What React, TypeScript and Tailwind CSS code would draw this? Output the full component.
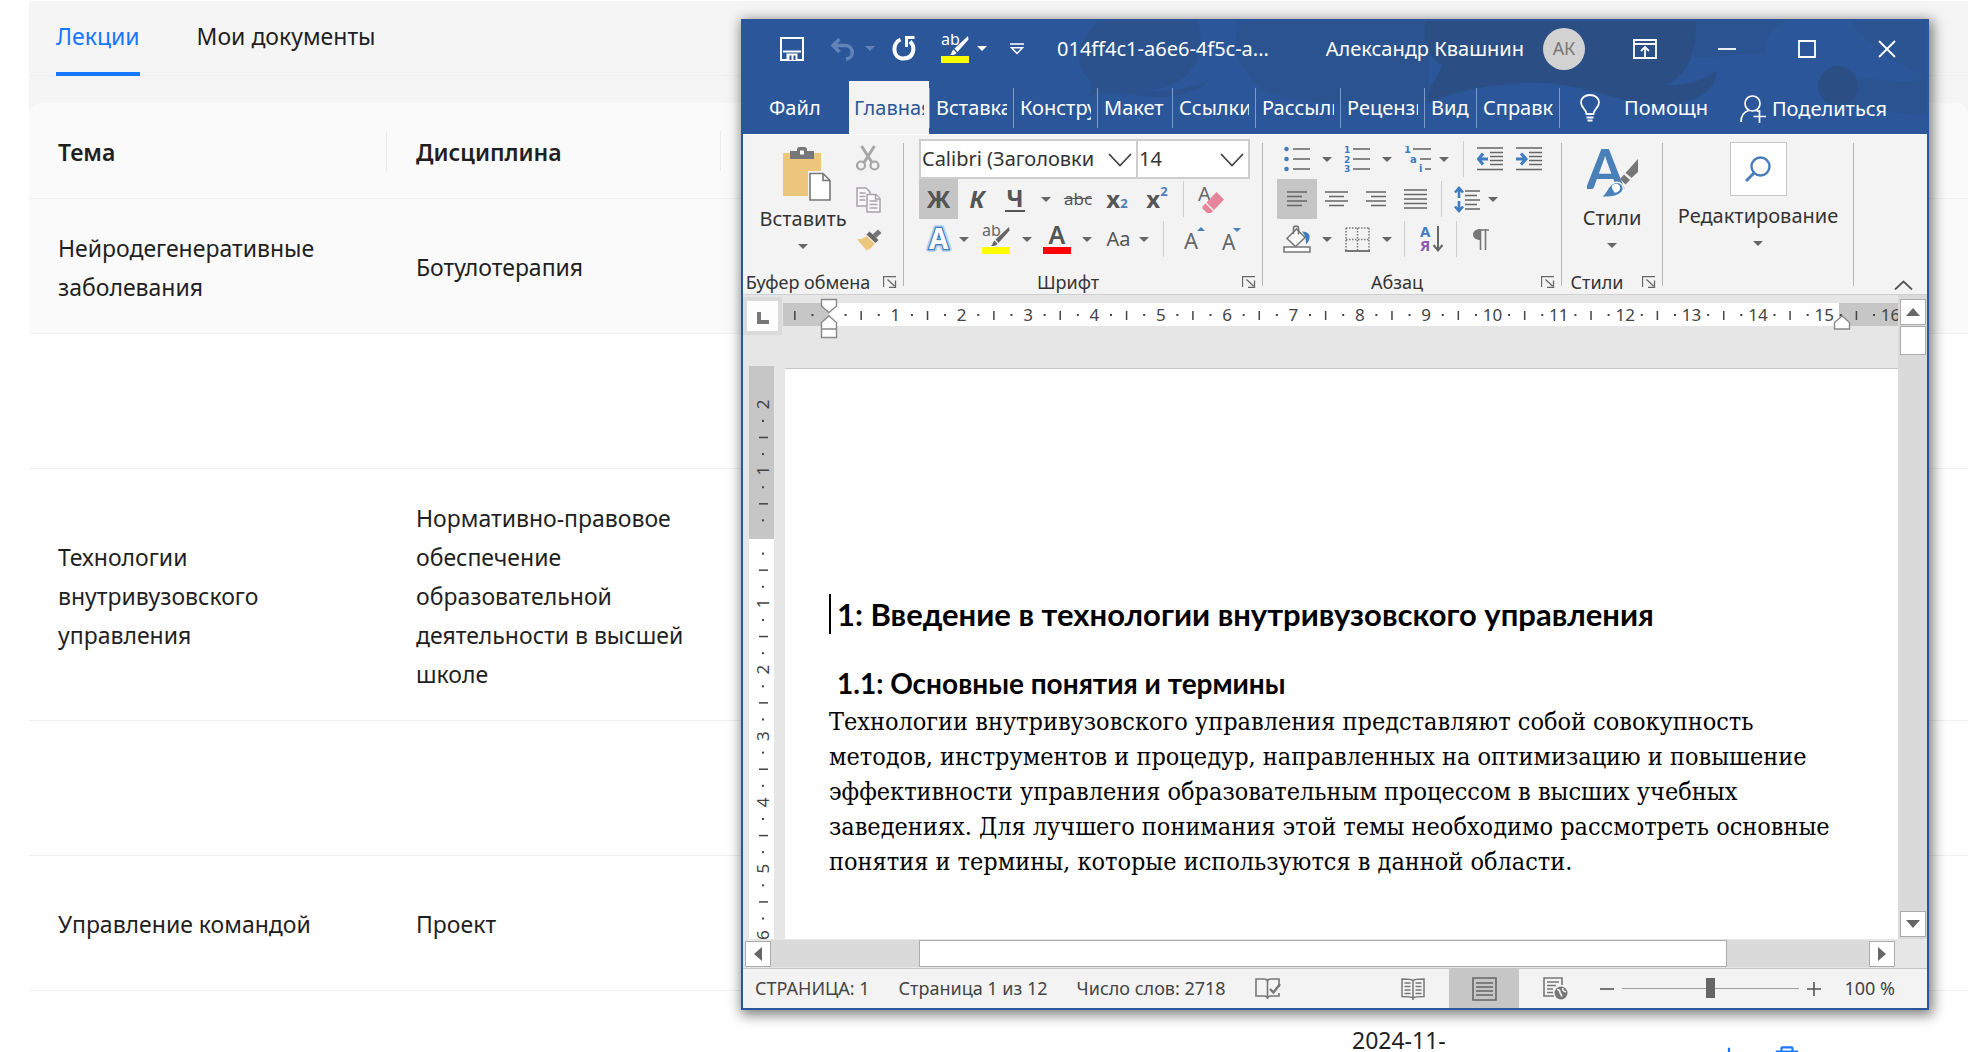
import type { ReactNode } from "react"
import { AiOutlineDelete, AiOutlineDownload } from "react-icons/ai"

interface Lecture {
  topic: string
  discipline: string
  height: string
  date?: string
  tinted?: boolean
}

const LECTURES: Lecture[] = [
  {
    topic: "Нейродегенеративные заболевания",
    discipline: "Ботулотерапия",
    height: "h-[135px]",
    tinted: true,
  },
  { topic: "", discipline: "", height: "h-[135px]" },
  {
    topic: "Технологии внутривузовского управления",
    discipline: "Нормативно-правовое обеспечение образовательной деятельности в высшей школе",
    height: "h-[252px]",
  },
  { topic: "", discipline: "", height: "h-[135px]" },
  { topic: "Управление командой", discipline: "Проект", height: "h-[135px]" },
  { topic: "", discipline: "", height: "h-[135px]", date: "2024-11-" },
]

const RIBBON_TABS = [
  { label: "Вставка", width: "w-[84px]" },
  { label: "Констру", width: "w-[84px]" },
  { label: "Макет", width: "w-[75px]" },
  { label: "Ссылки", width: "w-[83px]" },
  { label: "Рассылк", width: "w-[85px]" },
  { label: "Рецензи", width: "w-[84px]" },
  { label: "Вид", width: "w-[52px]" },
  { label: "Справк", width: "w-[83px]" },
]

// Un centimetro de la regla en pixeles
const CM = 66.35

/* ---------- Pagina de fondo ---------- */

function LecturesPage() {
  return (
    <main className="ml-[29px] mt-px bg-[#f5f5f5] text-[23px] leading-[39px] text-[#1f1f1f]">
      <nav className="mb-[27px] flex h-[75px] gap-[57px] border-b border-[#efefef] pl-[27px]">
        <a href="#lectures" className="h-[75px] border-b-4 border-[#1677ff] pt-4 text-[#1677ff]">
          Лекции
        </a>
        <a href="#documents" className="pt-4">
          Мои документы
        </a>
      </nav>

      <table className="w-full table-fixed border-separate border-spacing-0 text-left">
        <colgroup>
          <col className="w-[358px]" />
          <col className="w-[334px]" />
          <col className="w-[602px]" />
          <col className="w-[365px]" />
          <col />
        </colgroup>
        <thead>
          <tr className="h-[96px]">
            <th className="rounded-tl-xl border-b border-[#f0f0f0] bg-[#fafafa] pl-[29px] font-semibold">
              <div className="flex items-center justify-between">
                <span className="pt-1">Тема</span>
                <span className="h-10 w-px bg-[#ebebeb]" />
              </div>
            </th>
            <th className="border-b border-[#f0f0f0] bg-[#fafafa] pl-[29px] font-semibold">
              <div className="flex items-center justify-between">
                <span className="pt-1">Дисциплина</span>
                <span className="h-10 w-px bg-[#ebebeb]" />
              </div>
            </th>
            <td className="border-b border-[#f0f0f0] bg-[#fafafa]" />
            <td className="border-b border-[#f0f0f0] bg-[#fafafa]" />
            <td className="rounded-tr-xl border-b border-[#f0f0f0] bg-[#fafafa]" />
          </tr>
        </thead>
        <tbody>
          {LECTURES.map((l, i) => (
            <tr
              key={i}
              className={`${l.height} ${l.tinted ? "bg-[#fafafa]" : "bg-white"} [&>td]:border-b [&>td]:border-[#f0f0f0]`}
            >
              <td className="pl-[29px] pr-7 pt-[3px]">{l.topic}</td>
              <td className="pl-[29px] pr-7 pt-[3px]">{l.discipline}</td>
              <td />
              <td className="px-[29px] pt-[30px] align-top">{l.date}</td>
              <td className="pl-[26px]">
                {l.date && (
                  <div className="flex gap-7 text-[30px] text-[#1677ff]">
                    <button type="button" aria-label="Скачать">
                      <AiOutlineDownload />
                    </button>
                    <button type="button" aria-label="Удалить">
                      <AiOutlineDelete />
                    </button>
                  </div>
                )}
              </td>
            </tr>
          ))}
        </tbody>
      </table>
    </main>
  )
}

/* ---------- Piezas chicas de la cinta ---------- */

function Caret({ className = "" }: { className?: string }) {
  return (
    <svg viewBox="0 0 10 5" className={`h-[5px] w-[10px] shrink-0 ${className}`} aria-hidden="true">
      <path d="M0 0h10L5 5z" fill="currentColor" />
    </svg>
  )
}

function CaretButton({ width, label }: { width: string; label: string }) {
  return (
    <button
      type="button"
      aria-label={label}
      className={`flex h-full shrink-0 items-center justify-center text-[#666] ${width}`}
    >
      <Caret />
    </button>
  )
}

function Tool({
  width,
  label,
  active,
  className = "",
  children,
}: { width: string; label: string; active?: boolean; className?: string; children: ReactNode }) {
  return (
    <button
      type="button"
      aria-label={label}
      aria-pressed={active}
      className={`flex h-full shrink-0 items-center justify-center ${width} ${active ? "bg-[#c5c5c5]" : ""} ${className}`}
    >
      {children}
    </button>
  )
}

function Divider({ width }: { width: string }) {
  return (
    <div className={`flex h-full shrink-0 items-center justify-center ${width}`}>
      <div className="h-9 w-px bg-[#cfcfcf]" />
    </div>
  )
}

function GroupSeparator() {
  return <div className="my-2 w-px shrink-0 bg-[#b5b5b5]" />
}

function Group({ caption, width, children }: { caption?: string; width: string; children: ReactNode }) {
  return (
    <section className={`flex shrink-0 flex-col justify-between pb-[2px] ${width}`}>
      {children}
      {caption && (
        <div className="flex h-5 items-center pr-[6px] text-[18px] leading-5 text-[#333]">
          <span className="flex-1 whitespace-nowrap pr-[10px] text-center">{caption}</span>
          <button type="button" aria-label={`${caption}: параметры`}>
            <svg viewBox="0 0 14 12" className="h-3 w-[14px]" fill="none" stroke="#666">
              <path d="M.5 11V.5H13M4.500 3.500l7 6.500M12.500 4.500v7H6" strokeWidth="1.300" />
            </svg>
          </button>
        </div>
      )}
    </section>
  )
}

/** Lineas horizontales de un icono: [x1, x2, y]. */
function Lines({ rows, color = "#666", width = 1.6 }: { rows: number[][]; color?: string; width?: number }) {
  return (
    <path d={rows.map(([a, b, y]) => `M${a} ${y}H${b}`).join("")} stroke={color} strokeWidth={width} fill="none" />
  )
}

function HighlightIcon({ dark }: { dark?: boolean }) {
  const ink = dark ? "#666" : "#fff"
  return (
    <svg viewBox="0 0 28 29" className="h-[29px] w-7" aria-hidden="true">
      <text x="0" y="11" fontSize="16" fontFamily="Noto Sans" fill={ink}>
        ab
      </text>
      <path d="M27 2 13.500 14.500l3 3.500L27.500 5.500z" fill={ink} />
      <path d="M12.500 15.500l3 3.200c-1 2-3.500 2.300-6.500 2.300 1.800-1.300 1.800-4 3.500-5.500z" fill={ink} />
      <path d="M0 22h28v7H0z" fill="#ff0" />
    </svg>
  )
}

/* ---------- Encabezado de la ventana ---------- */

function HeaderArt() {
  return (
    <svg
      className="absolute inset-0 h-full w-full"
      viewBox="0 0 1184 113"
      preserveAspectRatio="none"
      aria-hidden="true"
    >
      <g fill="#2b4f85">
        <path
          d="M355 0h100c8 30-2 50-22 62-10 5-24 8-36 6 22 6 50 0 68-9-4 12-40 20-68 16-18-3-36-4-52 0 4-6 4-12 0-18C330 44 335 18 355 0z"
          opacity=".6"
        />
        <path d="M496 0h190v80c-20 8-34 12-62 8-30-8-60-4-104-18-20-18-34-40-24-70z" opacity=".5" />
        <path d="M683 0h270c0 34-8 54-30 64 16 2 36-4 50-14 2 20-24 34-56 34-46-2-80-24-134-22-44 2-74 10-98 20 0-18 10-26 14-38-14-8-20-24-16-44z" />
        <path d="M953 0h90c-18 8-24 24-20 34-22-4-40 4-72 2z" opacity=".4" />
        <circle cx="1095" cy="65" r="20" />
        <path d="M1098 64c30-14 60 4 86-8v38c-30-2-60-4-88-14z" opacity=".5" />
        <path d="M1108 0h76v60c-20-18-60-28-76-60z" opacity=".3" />
      </g>
    </svg>
  )
}

function TitleBar() {
  return (
    <div className="relative flex h-[55px] items-center pl-[37px] pr-[31px]">
      <button type="button" aria-label="Сохранить">
        <svg viewBox="0 0 24 24" className="size-6" fill="none" stroke="#fff" strokeWidth="2">
          <path d="M1 1h22v22H1z" />
          <path d="M3 14.500h18" />
          <path d="M6.500 23v-6.500h11V23z" fill="#fff" stroke="none" />
          <path d="M10.500 18.500V23M14.500 18.500V23" stroke="#2b579a" />
        </svg>
      </button>
      <button type="button" aria-label="Отменить" className="ml-[26px]">
        <svg viewBox="0 0 25 24" className="h-6 w-[25px]" fill="none" stroke="#6283b7" strokeWidth="3.500">
          <path d="M9.500 2 3 8.500 9.500 15M3.500 8.500H15c9 0 10 12.500 1 13.500" />
        </svg>
      </button>
      <Caret className="ml-[10px] text-[#6283b7]" />
      <button type="button" aria-label="Повторить" className="ml-[17px]">
        <svg viewBox="0 0 24 25" className="h-[25px] w-6" fill="none" stroke="#fff" strokeWidth="4">
          <path d="M8.500 3.500C0 7 0 22.500 11.500 22.500c11 0 12-12 6.500-17" />
          <path d="M13 1.500h9.500M14.500 1v10" strokeWidth="3" />
        </svg>
      </button>
      <button type="button" aria-label="Цвет выделения текста" className="ml-[25px]">
        <HighlightIcon />
      </button>
      <Caret className="ml-2 text-white" />
      <button type="button" aria-label="Настройка панели быстрого доступа" className="ml-[23px]">
        <svg viewBox="0 0 14 12" className="h-3 w-[14px]" fill="none" stroke="#fff" strokeWidth="1.400">
          <path d="M0 1h14M1.500 4.700h11L7 10.500z" />
        </svg>
      </button>
      <h1 className="ml-[33px] whitespace-nowrap">014ff4c1-a6e6-4f5c-a...</h1>

      <span className="ml-auto whitespace-nowrap">Александр Квашнин</span>
      <span className="ml-[19px] flex size-[42px] items-center justify-center rounded-full bg-[#d2d2d2] text-[18px] text-[#777]">
        АК
      </span>
      <button type="button" aria-label="Параметры отображения ленты" className="ml-12">
        <svg viewBox="0 0 24 20" className="h-5 w-6" fill="none" stroke="#fff" strokeWidth="1.800">
          <path d="M1 1h22v18H1zM1 5h22M12 18V8M8 12l4-4 4 4" />
        </svg>
      </button>
      <button type="button" aria-label="Свернуть" className="ml-[61px]">
        <svg viewBox="0 0 18 18" className="size-[18px]" stroke="#fff" strokeWidth="1.800">
          <path d="M0 9h18" />
        </svg>
      </button>
      <button type="button" aria-label="Развернуть" className="ml-[62px]">
        <svg viewBox="0 0 18 18" className="size-[18px]" fill="none" stroke="#fff" strokeWidth="1.800">
          <path d="M1 1h16v16H1z" />
        </svg>
      </button>
      <button type="button" aria-label="Закрыть" className="ml-[62px]">
        <svg viewBox="0 0 18 18" className="size-[18px]" stroke="#fff" strokeWidth="1.800">
          <path d="M1 1l16 16M17 1 1 17" />
        </svg>
      </button>
    </div>
  )
}

function RibbonTabs() {
  return (
    <nav className="relative flex h-[58px] items-end">
      <button type="button" className="h-[53px] w-[106px] pl-[26px] text-left">
        Файл
      </button>
      <button type="button" className="h-[53px] w-20 bg-[#f3f3f3] px-[5px] text-left text-[#2b579a]">
        <span className="block overflow-hidden whitespace-nowrap">Главная</span>
      </button>
      {RIBBON_TABS.map((t) => (
        <div key={t.label} className="flex h-[53px] shrink-0 items-center">
          <button type="button" className={`h-10 border-l border-[#7f9cc8] px-[6px] text-left ${t.width}`}>
            <span className="block overflow-hidden whitespace-nowrap">{t.label}</span>
          </button>
        </div>
      ))}
      <div className="flex h-[53px] flex-1 items-center">
        <div className="h-10 w-px shrink-0 bg-[#7f9cc8]" />
        <svg viewBox="0 0 20 28" className="ml-5 h-7 w-5 shrink-0" fill="none" stroke="#fff" strokeWidth="1.800">
          <path d="M6.500 20c0-5-5.500-6-5.500-11.500C1 4 5 1 10 1s9 3 9 7.500c0 5.500-5.500 6.500-5.500 11.500zM6.500 23.500h7M7.500 26.500h5" />
        </svg>
        <button type="button" className="ml-6 whitespace-nowrap">
          Помощн
        </button>
        <button type="button" className="ml-auto mr-10 flex items-center gap-[6px] whitespace-nowrap pt-[3px]">
          <svg viewBox="0 0 26 28" className="h-7 w-[26px]" fill="none" stroke="#fff" strokeWidth="1.700">
            <circle cx="12.500" cy="8.500" r="7.500" />
            <path d="M1 27c0-6 3-10 7.500-11.500M16.500 15.500l2 1M13.500 21.500H26M19.500 15v13" />
          </svg>
          Поделиться
        </button>
      </div>
    </nav>
  )
}

/* ---------- Cinta ---------- */

function ClipboardGroup() {
  return (
    <Group caption="Буфер обмена" width="w-[160px]">
      <div className="flex pl-[10px]">
        <button type="button" className="flex w-[100px] flex-col items-center pt-3">
          <svg viewBox="-8 0 56 54" className="h-[54px] w-14" aria-hidden="true">
            <path d="M0 6h38v43H0z" fill="#edc67e" />
            <path d="M7 4h7V2.500C14 1 15 0 16.500 0h5C23 0 24 1 24 2.500V4h7v8H7z" fill="#777" />
            <path d="M17 3.500h4v4h-4z" fill="#fff" />
            <path d="M25 24h23v30H25z" fill="#f3f3f3" />
            <path d="M27 26.500h13l7 7V53H27z" fill="#fff" stroke="#777" strokeWidth="1.600" />
            <path d="M40 26.500v7h7" fill="none" stroke="#777" strokeWidth="1.600" />
          </svg>
          <span className="mt-[6px] leading-6">Вставить</span>
          <Caret className="mt-[13px] text-[#666]" />
        </button>
        <div className="ml-[3px] flex flex-col gap-4 pt-[10px]">
          <button type="button" aria-label="Вырезать">
            <svg viewBox="0 0 26 26" className="size-[26px]" fill="none" stroke="#a6a6a6" strokeWidth="2.200">
              <path d="M5.500 1l10.500 16.500M18.500 1 8 17.500" strokeWidth="3" />
              <circle cx="5" cy="20.500" r="4" />
              <circle cx="18.500" cy="20.500" r="4" />
            </svg>
          </button>
          <button type="button" aria-label="Копировать">
            <svg viewBox="0 0 26 26" className="size-[26px]" fill="#f8f8f8" stroke="#a9a3ab" strokeWidth="1.500">
              <path d="M1 1h9l4 4v14H1z" />
              <path d="M3.500 6h6M3.500 9.500h6M3.500 13h6" />
              <path d="M11 7.500h9l4 4V25H11z" />
              <path d="M19.500 8v4H24M13.500 14h8M13.500 17.500h8M13.500 21h8" />
            </svg>
          </button>
          <button type="button" aria-label="Формат по образцу">
            <svg viewBox="0 0 26 26" className="size-[26px]" aria-hidden="true">
              <path d="M1 10c4 .500 7-.500 9.500-3l8 7.500C17 18 14 20 10.500 21.500z" fill="#edc67e" />
              <path d="M10.500 5.500l3-3 9 8.500-3 3z" fill="#666" />
              <path d="M16.500 5.500 22 .500l3.500 3.500L20 9z" fill="#777" />
            </svg>
          </button>
        </div>
      </div>
    </Group>
  )
}

function FontSelect({ id, label, value, width }: { id: string; label: string; value: string; width: string }) {
  return (
    <div className={`relative h-10 shrink-0 ${width}`}>
      <label htmlFor={id} className="sr-only">
        {label}
      </label>
      <select
        id={id}
        className="h-full w-full appearance-none border-2 border-[#cdcdcd] bg-white pl-px text-[20px] text-[#333]"
      >
        <option>{value}</option>
      </select>
      <svg
        viewBox="0 0 24 14"
        className="pointer-events-none absolute right-[6px] top-[14px] h-[14px] w-6"
        fill="none"
        stroke="#444"
        strokeWidth="1.800"
      >
        <path d="M1 1l11 11.500L23 1" />
      </svg>
    </div>
  )
}

function FontGroup() {
  return (
    <Group caption="Шрифт" width="w-[358px]">
      <div className="pl-[15px] pt-1 text-[#555]">
        <div className="flex h-10">
          <FontSelect id="font-name" label="Шрифт" value="Calibri (Заголовки" width="w-[219px]" />
          <FontSelect id="font-size" label="Размер шрифта" value="14" width="-ml-[2px] w-[114px]" />
        </div>
        <div className="flex h-10 text-[24px] leading-6">
          <Tool width="w-[39px]" label="Полужирный" active className="font-bold">
            Ж
          </Tool>
          <Tool width="w-[38px]" label="Курсив" className="font-bold italic">
            К
          </Tool>
          <Tool width="w-[38px]" label="Подчеркнутый" className="font-bold">
            <span className="border-b-2 border-[#555] px-px leading-[24px]">Ч</span>
          </Tool>
          <CaretButton width="w-[24px]" label="Вид подчеркивания" />
          <Tool width="w-[40px]" label="Зачеркнутый" className="text-[17px] line-through">
            abc
          </Tool>
          <Tool width="w-[38px]" label="Подстрочный знак" className="font-bold">
            x<span className="self-end pb-1 text-[13px] text-[#4a7ebb]">2</span>
          </Tool>
          <Tool width="w-[42px]" label="Надстрочный знак" className="font-bold">
            x<span className="self-start text-[13px] text-[#4a7ebb]">2</span>
          </Tool>
          <Divider width="w-[10px]" />
          <Tool width="w-[46px]" label="Удалить форматирование">
            <svg viewBox="0 0 26 27" className="h-[27px] w-[26px]" aria-hidden="true">
              <text x="0" y="15" fontSize="20" fontFamily="Noto Sans" fill="#666">
                A
              </text>
              <path d="M18.500 6 26 13.500 16 24 8.500 16.500z" fill="#e5849a" />
              <path d="M7.500 17.500 15 25l-2 2H9l-4.500-4.500v-2z" fill="#e5849a" />
            </svg>
          </Tool>
        </div>
        <div className="flex h-10">
          <Tool width="w-[40px]" label="Текстовые эффекты">
            <svg viewBox="0 0 30 30" className="size-[30px]" aria-hidden="true">
              <text
                x="5"
                y="25"
                fontSize="28"
                fontFamily="Noto Sans"
                fontWeight="bold"
                fill="#fff"
                stroke="#b9d3ee"
                strokeWidth="6"
                strokeLinejoin="round"
                paintOrder="stroke"
              >
                A
              </text>
              <text
                x="5"
                y="25"
                fontSize="28"
                fontFamily="Noto Sans"
                fontWeight="bold"
                fill="#fff"
                stroke="#3f7cc0"
                strokeWidth="2.500"
                paintOrder="stroke"
              >
                A
              </text>
            </svg>
          </Tool>
          <CaretButton width="w-[10px]" label="Эффекты" />
          <Tool width="w-[53px]" label="Цвет выделения">
            <HighlightIcon dark />
          </Tool>
          <CaretButton width="w-[10px]" label="Выбор цвета выделения" />
          <Tool width="w-[50px]" label="Цвет текста">
            <svg viewBox="0 0 28 29" className="h-[29px] w-7" aria-hidden="true">
              <text x="14" y="19" fontSize="25" fontFamily="Noto Sans" fontWeight="600" textAnchor="middle" fill="#555">
                A
              </text>
              <path d="M0 22h28v7H0z" fill="#f00" />
            </svg>
          </Tool>
          <CaretButton width="w-[10px]" label="Выбор цвета текста" />
          <Tool width="w-[47px]" label="Регистр" className="pl-[6px] text-[20px]">
            Aa
          </Tool>
          <CaretButton width="w-[10px]" label="Выбор регистра" />
          <Divider width="w-[29px]" />
          <Tool width="w-[34px]" label="Увеличить размер шрифта">
            <svg viewBox="0 0 24 26" className="h-[26px] w-6" aria-hidden="true">
              <text x="1" y="23" fontSize="22" fontFamily="Noto Sans" fill="#666">
                A
              </text>
              <path d="M14 5h8l-4-4z" fill="#4a7ebb" />
            </svg>
          </Tool>
          <Tool width="w-[38px]" label="Уменьшить размер шрифта">
            <svg viewBox="0 0 24 26" className="h-[26px] w-6" aria-hidden="true">
              <text x="3" y="24" fontSize="21" fontFamily="Noto Sans" fill="#666">
                A
              </text>
              <path d="M14 2h8l-4 4z" fill="#4a7ebb" />
            </svg>
          </Tool>
        </div>
      </div>
    </Group>
  )
}

function IndentIcon({ right }: { right?: boolean }) {
  return (
    <svg viewBox="0 0 26 24" className="h-6 w-[26px]" aria-hidden="true">
      <Lines rows={[[0, 26, 1], [13, 26, 5.5], [13, 26, 9.5], [13, 26, 13.5], [13, 26, 17.5], [0, 26, 22.5]]} />
      <path
        d={right ? "M0 12h9M5 6.500l5 5.500-5 5.500" : "M11 12H2M6 6.500 1.500 12 6 17.500"}
        stroke="#3f7cc0"
        strokeWidth="3"
        fill="none"
      />
    </svg>
  )
}

function ParagraphGroup() {
  return (
    <Group caption="Абзац" width="w-[298px]">
      <div className="pl-[14px] pt-1">
        <div className="flex h-10 items-center">
          <Tool width="w-[40px]" label="Маркеры">
            <svg viewBox="0 0 26 26" className="size-[26px]" aria-hidden="true">
              <Lines rows={[[9, 26, 3], [9, 26, 13], [9, 26, 23]]} />
              <g fill="#3f7cc0">
                <circle cx="2.500" cy="3" r="2.300" />
                <circle cx="2.500" cy="13" r="2.300" />
                <circle cx="2.500" cy="23" r="2.300" />
              </g>
            </svg>
          </Tool>
          <CaretButton width="w-[20px]" label="Библиотека маркеров" />
          <Tool width="w-[40px]" label="Нумерация">
            <svg viewBox="0 0 26 26" className="size-[26px]" aria-hidden="true">
              <Lines rows={[[9, 26, 3], [9, 26, 13], [9, 26, 23]]} />
              <g fontSize="9" fontFamily="DejaVu Sans" fontWeight="bold" fill="#3f7cc0">
                <text x="0" y="6.500">1</text>
                <text x="0" y="16.500">2</text>
                <text x="0" y="26">3</text>
              </g>
            </svg>
          </Tool>
          <CaretButton width="w-[20px]" label="Библиотека нумерации" />
          <Tool width="w-[40px]" label="Многоуровневый список">
            <svg viewBox="0 0 27 26" className="h-[26px] w-[27px]" aria-hidden="true">
              <Lines rows={[[9, 27, 3], [16, 27, 13], [21, 27, 23]]} />
              <g fontSize="10" fontFamily="DejaVu Sans" fontWeight="bold" fill="#3f7cc0">
                <text x="0" y="7">1</text>
                <text x="6" y="16.500">a</text>
                <text x="15" y="26">i</text>
              </g>
            </svg>
          </Tool>
          <CaretButton width="w-[13px]" label="Библиотека списков" />
          <Divider width="w-[27px]" />
          <Tool width="w-[26px]" label="Уменьшить отступ">
            <IndentIcon />
          </Tool>
          <Tool width="w-[26px]" label="Увеличить отступ" className="ml-[13px]">
            <IndentIcon right />
          </Tool>
        </div>
        <div className="flex h-10 items-center">
          <Tool width="w-[40px]" label="По левому краю" active>
            <svg viewBox="0 0 24 20" className="h-5 w-6" aria-hidden="true">
              <Lines rows={[[2, 22, 3], [2, 17, 7.5], [2, 22, 12], [2, 17, 16.5]]} />
            </svg>
          </Tool>
          <Tool width="w-[40px]" label="По центру">
            <svg viewBox="0 0 24 20" className="h-5 w-6" aria-hidden="true">
              <Lines rows={[[0, 23, 3], [4, 19, 7.5], [0, 23, 12], [4, 19, 16.5]]} />
            </svg>
          </Tool>
          <Tool width="w-[40px]" label="По правому краю">
            <svg viewBox="0 0 24 20" className="h-5 w-6" aria-hidden="true">
              <Lines rows={[[1, 21, 3], [6, 21, 7.5], [1, 21, 12], [6, 21, 16.5]]} />
            </svg>
          </Tool>
          <Tool width="w-[38px]" label="По ширине">
            <svg viewBox="0 0 24 20" className="h-5 w-6" aria-hidden="true">
              <Lines rows={[[0, 23, 1], [0, 23, 5.5], [0, 23, 10], [0, 23, 14.5], [0, 23, 19]]} />
            </svg>
          </Tool>
          <Divider width="w-[13px]" />
          <Tool width="w-[37px]" label="Интервал">
            <svg viewBox="0 0 26 27" className="h-[27px] w-[26px]" aria-hidden="true">
              <Lines rows={[[11, 26, 5], [11, 23, 9.5], [11, 26, 14], [11, 23, 18.5], [11, 26, 23]]} />
              <path
                d="M5 12V2.500M1 6.500l4-4.500 4 4.500M5 15v9.500M1 20.500l4 4.500 4-4.500"
                stroke="#3f7cc0"
                strokeWidth="2.600"
                fill="none"
              />
            </svg>
          </Tool>
          <CaretButton width="w-[15px]" label="Выбор интервала" />
        </div>
        <div className="flex h-10 items-center">
          <Tool width="w-[40px]" label="Заливка">
            <svg viewBox="0 0 28 28" className="size-7" aria-hidden="true">
              <path d="M4 13.500 13.500 4l8.500 8.500-9.500 9z" fill="#fff" stroke="#777" strokeWidth="1.600" />
              <path d="M10.500 9V3c0-2.500 5-2.500 5 0v6.500" fill="none" stroke="#777" strokeWidth="1.600" />
              <path d="M19 6.500c5.500 0 8.500 3 7.500 7-.600 2.500-2 4.500-3.500 6 0-5-.500-9-4-13z" fill="#3f7cc0" />
              <path d="M1 22h26v5H1z" fill="#fff" stroke="#777" strokeWidth="1.600" />
            </svg>
          </Tool>
          <CaretButton width="w-[20px]" label="Цвет заливки" />
          <Tool width="w-[40px]" label="Границы">
            <svg viewBox="0 0 25 25" className="size-[25px]" fill="none" stroke="#777" strokeWidth="1.500">
              <path d="M1 1h23M1 12.500h23M1 1v22M12.500 1v22M24 1v22" strokeDasharray="1.500 1.500" />
              <path d="M0 24h25" strokeWidth="2" />
            </svg>
          </Tool>
          <CaretButton width="w-[20px]" label="Выбор границ" />
          <Divider width="w-[15px]" />
          <Tool width="w-[40px]" label="Сортировка">
            <svg viewBox="0 0 24 28" className="h-7 w-6" aria-hidden="true">
              <g fontSize="15" fontFamily="Noto Sans" fontWeight="bold">
                <text x="0" y="12" fill="#3f7cc0">А</text>
                <text x="0" y="26" fill="#8a55b0">Я</text>
              </g>
              <path d="M18 1v24M13.500 20l4.500 5.500 4.500-5.500" fill="none" stroke="#666" strokeWidth="2" />
            </svg>
          </Tool>
          <Divider width="w-[9px]" />
          <Tool width="w-[40px]" label="Отобразить все знаки">
            <svg viewBox="0 0 16 21" className="h-[21px] w-4" aria-hidden="true">
              <path d="M7.500 0v11C2.500 11 0 8.500 0 5.500S2.500 0 7.500 0z" fill="#777" />
              <path d="M6 1h10M7.500 0v21M12.500 0v21" fill="none" stroke="#777" strokeWidth="1.600" />
            </svg>
          </Tool>
        </div>
      </div>
    </Group>
  )
}

function Ribbon() {
  return (
    <div className="flex h-[161px] border-b border-t border-b-[#cfcfcf] border-t-[#fdfdfd] bg-[#f3f3f3] text-[20px] text-[#333]">
      <ClipboardGroup />
      <GroupSeparator />
      <FontGroup />
      <GroupSeparator />
      <ParagraphGroup />
      <GroupSeparator />
      <Group caption="Стили" width="w-[100px]">
        <button type="button" className="flex flex-col items-center pt-[13px]">
          <svg viewBox="0 0 51 50" className="h-[50px] w-[51px]" aria-hidden="true">
            <text x="-1" y="41" fontSize="55" fontFamily="Lato" fontWeight="bold" fill="#4a80b8">
              A
            </text>
            <path
              d="M13 49c7-2 7-13 15-14.500 6-1 9 3 8 7.500C34.500 48 24 50 13 49z"
              fill="#4a80b8"
              stroke="#f3f3f3"
              strokeWidth="1.500"
            />
            <path d="M25 38c3-4 9-2 8 3-1 3-4 4-6 3.500 0-3-3-3-2-6.500z" fill="#fff" />
            <path d="M51 11v13l-6.500 6-6-5z" fill="#777" />
            <path d="M37 26.500l6 5.500-4.500 4.500L33 31z" fill="#777" />
          </svg>
          <span className="mt-2 leading-6">Стили</span>
          <Caret className="mt-[13px] text-[#666]" />
        </button>
      </Group>
      <GroupSeparator />
      <Group width="w-[190px]">
        <button type="button" className="flex flex-col items-center pt-[7px]">
          <span className="flex h-[54px] w-[57px] items-center justify-center border border-[#c6c6c6] bg-white">
            <svg viewBox="0 0 26 26" className="size-[26px]" fill="none" stroke="#4a7ebb" strokeWidth="2.400">
              <circle cx="15.500" cy="10.500" r="9" />
              <path d="M9 17l-8 8" strokeWidth="3" />
            </svg>
          </span>
          <span className="mt-2 leading-6">Редактирование</span>
          <Caret className="mt-[13px] text-[#666]" />
        </button>
      </Group>
      <GroupSeparator />
      <button type="button" aria-label="Свернуть ленту" className="mb-1 ml-auto mr-[14px] self-end">
        <svg viewBox="0 0 19 10" className="h-[10px] w-[19px]" fill="none" stroke="#555" strokeWidth="1.800">
          <path d="M1 9.500 9.500 1.500 18 9.500" />
        </svg>
      </button>
    </div>
  )
}

/* ---------- Reglas ---------- */

function HorizontalRuler() {
  const origin = 46
  const steps = Array.from({ length: 67 }, (_, i) => i - 2).filter((i) => i !== 0)
  return (
    <svg className="h-[42px] min-w-0 flex-1" aria-hidden="true">
      <rect x="0" y="6" width="100%" height="23" fill="#c6c6c6" />
      <rect x={origin} y="6" width="1010" height="23" fill="#fff" />
      {steps.map((i) => {
        const x = origin + (i * CM) / 4
        if (i % 4 === 0) {
          return (
            <text key={i} x={x} y="24" fontSize="17" textAnchor="middle" fill="#444">
              {i / 4}
            </text>
          )
        }
        return i % 2 === 0 ? (
          <path key={i} d={`M${x - 1} 14v9`} stroke="#444" strokeWidth="1.500" />
        ) : (
          <rect key={i} x={x - 1} y="17" width="2" height="2" fill="#444" />
        )
      })}
      <g fill="#fff" stroke="#888" strokeWidth="1.400">
        <path d="M38.500 2.500h15V9L46 15.500 38.500 9z" />
        <path d="M38.500 32v-6.500L46 19l7.500 6.500V32zM38.500 32h15v8.500h-15z" />
        <path d="M1051.500 32v-6.500l7.500-6.500 7.500 6.500V32z" />
      </g>
    </svg>
  )
}

function VerticalRuler() {
  const origin = 171
  const steps = Array.from({ length: 33 }, (_, i) => i - 8).filter((i) => i !== 0)
  return (
    <svg className="ml-[6px] w-[25px] shrink-0 self-stretch" aria-hidden="true">
      <rect width="25" height="100%" fill="#fff" />
      <rect width="25" height="173" fill="#c6c6c6" />
      {steps.map((i) => {
        const y = origin + (i * CM) / 4
        if (i % 4 === 0) {
          return (
            <text key={i} fontSize="17" textAnchor="middle" fill="#444" transform={`translate(20 ${y}) rotate(-90)`}>
              {Math.abs(i / 4)}
            </text>
          )
        }
        return i % 2 === 0 ? (
          <path key={i} d={`M10 ${y}h9`} stroke="#444" strokeWidth="1.500" />
        ) : (
          <rect key={i} x="13" y={y - 1} width="2" height="2" fill="#444" />
        )
      })}
    </svg>
  )
}

/* ---------- Documento ---------- */

function ScrollArrow({ label, path }: { label: string; path: string }) {
  return (
    <button
      type="button"
      aria-label={label}
      className="flex size-[26px] shrink-0 items-center justify-center border border-[#ababab] bg-white"
    >
      <svg viewBox="0 0 14 14" className="size-[14px]" fill="#666">
        <path d={path} />
      </svg>
    </button>
  )
}

function DocumentArea() {
  return (
    <div className="flex min-h-0 flex-1 bg-[#e6e6e6]">
      <div className="flex min-w-0 flex-1 flex-col">
        <div className="flex h-[71px] shrink-0 items-start pt-[2px]">
          <button
            type="button"
            aria-label="Тип табуляции"
            className="mr-px flex h-[38px] w-[39px] shrink-0 items-center justify-center border-4 border-[#dadada] bg-[#fdfdfd]"
          >
            <svg viewBox="0 0 12 12" className="mt-1 size-3" stroke="#777" strokeWidth="4" fill="none">
              <path d="M2 0v10h10" />
            </svg>
          </button>
          <HorizontalRuler />
        </div>
        <div className="flex min-h-0 flex-1 overflow-hidden">
          <VerticalRuler />
          <article className="ml-[11px] mt-[2px] flex-1 border-t border-[#c6c6c6] bg-white pl-11 text-black">
            <h2 className="mt-[225px] border-l-2 border-black pl-[6px] font-['Lato','Noto_Sans',sans-serif] text-[31px] font-bold leading-10">
              1: Введение в технологии внутривузовского управления
            </h2>
            <h3 className="mb-px mt-[29px] pl-2 font-['Lato','Noto_Sans',sans-serif] text-[28px] font-bold leading-10">
              1.1: Основные понятия и термины
            </h3>
            <p className="max-w-[1010px] font-['DejaVu_Serif_Condensed','DejaVu_Serif',serif] text-[25px] leading-[35px]">
              Технологии внутривузовского управления представляют собой совокупность методов, инструментов и
              процедур, направленных на оптимизацию и повышение эффективности управления образовательным
              процессом в высших учебных заведениях. Для лучшего понимания этой темы необходимо рассмотреть
              основные понятия и термины, которые используются в данной области.
            </p>
          </article>
        </div>
      </div>
      <div className="flex w-[29px] shrink-0 flex-col items-center bg-[#dadada] pb-[2px] pt-1">
        <ScrollArrow label="Прокрутить вверх" path="M0 11h14L7 3z" />
        <div className="mt-px h-[29px] w-[26px] border border-[#ababab] bg-white" />
        <div className="mt-auto">
          <ScrollArrow label="Прокрутить вниз" path="M0 3h14l-7 8z" />
        </div>
      </div>
    </div>
  )
}

function HorizontalScroll() {
  return (
    <div className="flex h-[29px] shrink-0 items-center bg-[#e6e6e6] pl-[2px] pr-8">
      <ScrollArrow label="Прокрутить влево" path="M11 0v14L3 7z" />
      <div className="flex h-[27px] flex-1 bg-[#dadada]">
        <div className="flex-[148]" />
        <div className="flex-[808] border border-[#ababab] bg-white" />
        <div className="flex-[142]" />
      </div>
      <ScrollArrow label="Прокрутить вправо" path="M3 0v14l8-7z" />
    </div>
  )
}

function StatusBar() {
  return (
    <footer className="flex h-10 shrink-0 items-center border-t border-[#c6c6c6] bg-[#f3f3f3] pl-3 text-[18px] text-[#444]">
      <span className="whitespace-nowrap">СТРАНИЦА: 1</span>
      <span className="ml-[29px] whitespace-nowrap">Страница 1 из 12</span>
      <span className="ml-[29px] whitespace-nowrap">Число слов: 2718</span>
      <button type="button" aria-label="Правописание" className="ml-[29px]">
        <svg viewBox="0 0 26 22" className="h-[22px] w-[26px]" fill="none" stroke="#777" strokeWidth="1.600">
          <path d="M24 9V1h-8c-2 0-3.500 1-3.500 2.500C12.500 2 11 1 9 1H1v17h8c2 0 3.500 1 3.500 3 0-2 1.500-3 3.500-3h8v-3M12.500 3.500V21" />
          <path d="M15 11l3.500 3.500L25 6" strokeWidth="2.400" />
        </svg>
      </button>

      <button type="button" aria-label="Режим чтения" className="ml-auto mr-6">
        <svg viewBox="0 0 24 22" className="h-[22px] w-6" fill="none" stroke="#777" strokeWidth="1.500">
          <path d="M12 2.500C11 1.500 9 1 1 1v17.500c8 0 10 .500 11 1.500 1-1 3-1.500 11-1.500V1c-8 0-10 .500-11 1.500zM12 2v20" />
          <path d="M3.500 5h6M3.500 8.500h6M3.500 12h6M3.500 15.500h6M14.500 5h6M14.500 8.500h6M14.500 12h6M14.500 15.500h6" />
        </svg>
      </button>
      <button
        type="button"
        aria-label="Разметка страницы"
        className="flex h-full w-[70px] items-center justify-center bg-[#c6c6c6]"
      >
        <svg viewBox="0 0 25 24" className="h-6 w-[25px]" fill="none" stroke="#666" strokeWidth="1.600">
          <path d="M1 1h23v22H1zM4 6h17M4 10h17M4 14h17M4 18h17" />
        </svg>
      </button>
      <button type="button" aria-label="Веб-документ" className="ml-6">
        <svg viewBox="0 0 25 23" className="h-[23px] w-[25px]" fill="none" stroke="#777" strokeWidth="1.600">
          <path d="M11 19H1V1h18v7M4 5h12M4 8.500h9M4 12h6M4 15.500h6" />
          <circle cx="18" cy="16" r="6.500" fill="#777" stroke="none" />
          <path d="M14 12.500c2 0 3 1.500 3 3s2 1.500 1.500 4M20 11c-1 2 0 3 3 4" stroke="#f3f3f3" />
        </svg>
      </button>
      <button type="button" aria-label="Уменьшить масштаб" className="ml-8">
        <svg viewBox="0 0 14 14" className="size-[14px]" stroke="#555" strokeWidth="1.600">
          <path d="M0 7h14" />
        </svg>
      </button>
      <input
        type="range"
        aria-label="Масштаб"
        defaultValue={50}
        className="mx-2 h-5 w-[177px] appearance-none bg-transparent [&::-webkit-slider-runnable-track]:h-px [&::-webkit-slider-runnable-track]:bg-[#a0a0a0] [&::-webkit-slider-thumb]:-mt-[10px] [&::-webkit-slider-thumb]:h-5 [&::-webkit-slider-thumb]:w-[9px] [&::-webkit-slider-thumb]:appearance-none [&::-webkit-slider-thumb]:bg-[#666]"
      />
      <button type="button" aria-label="Увеличить масштаб">
        <svg viewBox="0 0 14 14" className="size-[14px]" stroke="#555" strokeWidth="1.600">
          <path d="M0 7h14M7 0v14" />
        </svg>
      </button>
      <span className="ml-[23px] mr-8 whitespace-nowrap">100 %</span>
    </footer>
  )
}

function WordWindow() {
  return (
    <div className="absolute bottom-[42px] left-[741px] right-[39px] top-[19px] flex flex-col overflow-hidden border-2 border-[#2b579a] shadow-[2px_3px_12px_2px_rgba(0,0,0,0.5)]">
      <header className="relative shrink-0 bg-[#2b579a] text-[20px] text-white">
        <HeaderArt />
        <TitleBar />
        <RibbonTabs />
      </header>
      <Ribbon />
      <DocumentArea />
      <HorizontalScroll />
      <StatusBar />
    </div>
  )
}

export default function App() {
  return (
    <div className="relative h-screen overflow-hidden bg-white font-['Noto_Sans','Open_Sans',sans-serif]">
      <LecturesPage />
      <WordWindow />
    </div>
  )
}
